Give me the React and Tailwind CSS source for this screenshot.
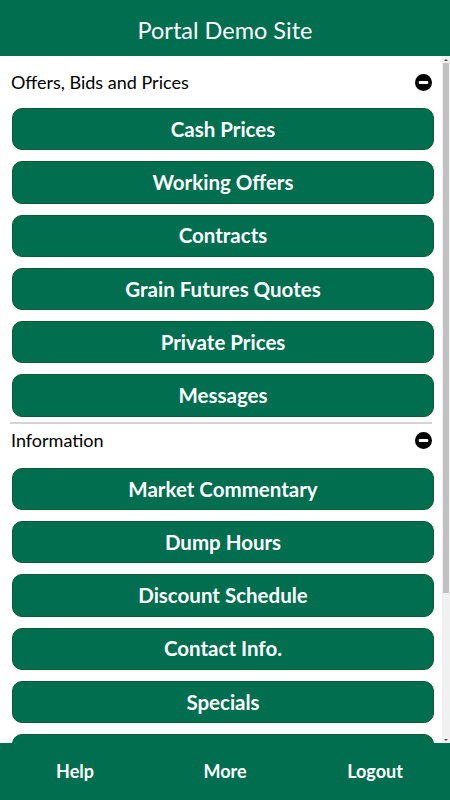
const offers = ['Cash Prices', 'Working Offers', 'Contracts', 'Grain Futures Quotes', 'Private Prices', 'Messages'];
const info = ['Market Commentary', 'Dump Hours', 'Discount Schedule', 'Contact Info.', 'Specials', 'Weather', 'Links'];

function MinusIcon() {
  return (
    <svg width="17" height="17" viewBox="0 0 16 16">
      <circle cx="8" cy="8" r="8" fill="#000" />
      <rect x="3.5" y="6.6" width="9" height="2.8" rx="1" fill="#fff" />
    </svg>
  );
}

function SectionHeader({ title }) {
  return (
    <div className="flex h-[36px] items-center justify-between pl-[11px] pr-[10px]">
      <span className="text-[18px] text-black">{title}</span>
      <MinusIcon />
    </div>
  );
}

function MenuButton({ label }) {
  return (
    <button className="flex h-[42.3px] w-full shrink-0 items-center justify-center rounded-[10px] border border-[#0b5a32] bg-[#016e4f] text-[20.5px] font-bold text-white">
      {label}
    </button>
  );
}

function Scrollbar() {
  return (
    <div className="flex w-[8px] shrink-0 flex-col items-center bg-[#f1f1f1]">
      <div className="flex h-[7px] items-center justify-center">
        <div className="h-0 w-0 border-x-[2px] border-b-[2px] border-x-transparent border-b-[#505050]" />
      </div>
      <div className="h-[530px] w-[6px] bg-[#c1c1c1]" />
      <div className="flex-1" />
      <div className="flex h-[7px] items-center justify-center">
        <div className="h-0 w-0 border-x-[2px] border-t-[2px] border-x-transparent border-t-[#505050]" />
      </div>
    </div>
  );
}

export default function App() {
  return (
    <div className="flex h-[800px] w-[450px] flex-col bg-white font-['Lato','Liberation_Sans',sans-serif]">
      <header className="flex h-[56px] shrink-0 items-center justify-center bg-[#016e4f] pt-[6px]">
        <h1 className="text-[23.5px] text-white">Portal Demo Site</h1>
      </header>

      <main className="flex min-h-0 flex-1">
        <div className="min-w-0 flex-1 overflow-hidden">
          <section className="pt-[8px]">
            <SectionHeader title="Offers, Bids and Prices" />
            <div className="mt-[8px] ml-[12px] mr-[8px] flex flex-col gap-[11px]">
              {offers.map((o) => (
                <MenuButton key={o} label={o} />
              ))}
            </div>
          </section>

          <div className="mx-[10px] mt-[5px] h-[2px] bg-[#d4d4d4]" />

          <section className="pb-[12px]">
            <div className="-mt-[1px]">
              <SectionHeader title="Information" />
            </div>
            <div className="mt-[9px] ml-[12px] mr-[8px] flex flex-col gap-[11px]">
              {info.map((o) => (
                <MenuButton key={o} label={o} />
              ))}
            </div>
          </section>
        </div>
        <Scrollbar />
      </main>

      <footer className="grid h-[57px] shrink-0 grid-cols-3 items-center bg-[#016e4f] pb-[1px] text-[18px] font-bold text-white">
        <button className="text-center">Help</button>
        <button className="text-center">More</button>
        <button className="text-center">Logout</button>
      </footer>
    </div>
  );
}
